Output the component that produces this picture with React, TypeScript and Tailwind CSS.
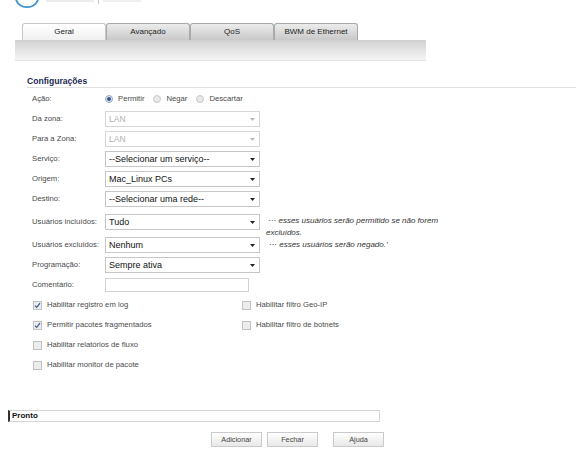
import React from "react";

const font = { fontFamily: "'Liberation Sans', Arial, sans-serif" };

const tabs = ["Geral", "Avançado", "QoS", "BWM de Ethernet"];

const Arrow: React.FC<{ light?: boolean }> = ({ light }) => (
  <svg width="5" height="3" viewBox="0 0 5 3" className="mr-[4px]">
    <path d="M0 0H5L2.5 3Z" fill={light ? "#b8b8b8" : "#222"} />
  </svg>
);

interface SelectProps {
  value: string;
  disabled?: boolean;
}

const FakeSelect: React.FC<SelectProps> = ({ value, disabled }) => (
  <div
    className={`flex h-[16px] w-[155px] shrink-0 items-center justify-between border bg-white ${
      disabled ? "border-[#d6d6d6]" : "border-[#c6c6c6]"
    }`}
  >
    <span
      className={`pl-[3px] leading-none ${
        disabled ? "text-[8.5px] text-[#b0b0b0]" : "text-[9px] text-[#111]"
      }`}
    >
      {value}
    </span>
    <Arrow light={disabled} />
  </div>
);

const Label: React.FC<{ children: React.ReactNode }> = ({ children }) => (
  <div className="w-[73px] shrink-0 box-content pl-[32px] text-[7.7px] text-[#4a4a4a] whitespace-nowrap">
    {children}
  </div>
);

const Row: React.FC<{ label: string; children: React.ReactNode }> = ({ label, children }) => (
  <div className="flex h-[20px] items-center">
    <Label>{label}</Label>
    {children}
  </div>
);

const Radio: React.FC<{ checked?: boolean; label: string }> = ({ checked, label }) => (
  <span className="mr-[9px] flex items-center gap-[5px]">
    <span
      className={`flex h-[8px] w-[8px] items-center justify-center rounded-full border ${
        checked ? "border-[#9aa8bd] bg-[#e4e9f1]" : "border-[#c9c9c9] bg-[#e9e9e9]"
      }`}
    >
      {checked && <span className="h-[4px] w-[4px] rounded-full bg-[#2f5796]" />}
    </span>
    <span className="text-[7.7px] text-[#4a4a4a]">{label}</span>
  </span>
);

const Check: React.FC<{ checked?: boolean; label: string }> = ({ checked, label }) => (
  <div className="flex h-[20px] items-center gap-[5px]">
    <span className="flex h-[9px] w-[9px] items-center justify-center border border-[#c2c2c2] bg-[#ececec]">
      {checked && (
        <svg width="7" height="7" viewBox="0 0 7 7">
          <path d="M1 3.6L2.7 5.4L6 1.2" stroke="#3b5a92" strokeWidth="1.2" fill="none" />
        </svg>
      )}
    </span>
    <span className="text-[7.7px] text-[#4a4a4a]">{label}</span>
  </div>
);

const Button: React.FC<{ label: string }> = ({ label }) => (
  <button className="h-[15px] w-[51px] border border-[#cacaca] bg-gradient-to-b from-white to-[#e8e8e8] text-[7.3px] leading-none text-[#444]">
    {label}
  </button>
);

export default function App() {
  return (
    <div className="h-[465px] w-[576px] overflow-hidden bg-white" style={font}>
      {/* cropped logo */}
      <div className="relative h-[23px]">
        <svg width="140" height="12" viewBox="0 0 140 12" className="absolute left-[12px] top-0">
          <path d="M4 0 A12 12 0 0 0 26 0" stroke="#3a8fd0" strokeWidth="1.8" fill="none" />
          <rect x="34" y="0" width="48" height="2" fill="#ececec" />
          <rect x="86" y="0" width="1" height="4" fill="#c4c4c4" />
          <rect x="91" y="0" width="38" height="2" fill="#f0f0f0" />
        </svg>
      </div>

      {/* tabs */}
      <div className="flex h-[17px] pl-[22px]">
        {tabs.map((t, i) => (
          <div
            key={t}
            className={`flex w-[84px] items-center justify-center rounded-t-[3px] border border-b-0 text-[8px] text-[#222] ${
              i === 0
                ? "border-[#c8c8c8] bg-gradient-to-b from-white to-[#f0f0f0]"
                : "border-[#a9a9a9] bg-gradient-to-b from-[#ececec] to-[#c9c9c9]"
            }`}
          >
            {t}
          </div>
        ))}
      </div>
      <div className="ml-[15px] h-[20px] w-[411px] border-t border-[#d0d0d0] bg-gradient-to-b from-[#d4d4d4] to-[#f5f5f5]" />
      <div className="ml-[15px] h-px w-[411px] bg-[#e2e2e2]" />

      {/* section */}
      <div className="mt-[15px] ml-[27px] flex h-[12px] items-center border-b border-[#e0e0e0] text-[8.6px] font-bold text-[#1c2a55]">
        Configurações
      </div>

      <div className="pt-[1px]">
        <Row label="Ação:">
          <Radio checked label="Permitir" />
          <Radio label="Negar" />
          <Radio label="Descartar" />
        </Row>
        <Row label="Da zona:">
          <FakeSelect value="LAN" disabled />
        </Row>
        <Row label="Para a Zona:">
          <FakeSelect value="LAN" disabled />
        </Row>
        <Row label="Serviço:">
          <FakeSelect value="--Selecionar um serviço--" />
        </Row>
        <Row label="Origem:">
          <FakeSelect value="Mac_Linux PCs" />
        </Row>
        <Row label="Destino:">
          <FakeSelect value="--Selecionar uma rede--" />
        </Row>
        <div className="flex h-[26px] items-start pt-[5px]">
          <div className="flex h-[16px] items-center">
            <Label>Usuários incluídos:</Label>
          </div>
          <FakeSelect value="Tudo" />
          <p className="ml-[6px] w-[176px] pt-[1px] text-[8px] italic leading-[12px] text-[#333]">
            &nbsp;··· esses usuários serão permitido se não forem excluídos.
          </p>
        </div>
        <Row label="Usuários excluídos:">
          <FakeSelect value="Nenhum" />
          <span className="ml-[9px] text-[8px] italic text-[#333]">··· esses usuários serão negado.’</span>
        </Row>
        <Row label="Programação:">
          <FakeSelect value="Sempre ativa" />
        </Row>
        <Row label="Comentário:">
          <div className="h-[14px] w-[144px] border border-[#d2d2d2] bg-white" />
        </Row>
      </div>

      {/* options */}
      <div className="flex pl-[33px]">
        <div className="w-[209px]">
          <Check checked label="Habilitar registro em log" />
          <Check checked label="Permitir pacotes fragmentados" />
          <Check label="Habilitar relatórios de fluxo" />
          <Check label="Habilitar monitor de pacote" />
        </div>
        <div>
          <Check label="Habilitar filtro Geo-IP" />
          <Check label="Habilitar filtro de botnets" />
        </div>
      </div>

      {/* status */}
      <div className="mt-[35px] ml-[8px] flex h-[12px] w-[372px] items-center border border-l-2 border-[#d4d4d4] border-l-[#333] pl-[2px] text-[8px] font-bold text-[#111]">
        Pronto
      </div>

      <div className="mt-[10px] ml-[211px] flex gap-[5px]">
        <Button label="Adicionar" />
        <Button label="Fechar" />
        <div className="w-[5px]" />
        <Button label="Ajuda" />
      </div>
    </div>
  );
}
